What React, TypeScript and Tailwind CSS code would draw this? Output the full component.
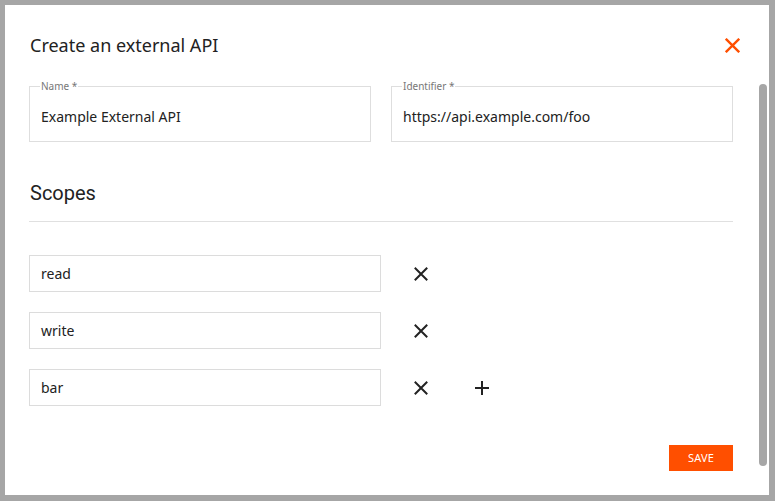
import React from "react";

const XIcon = ({ className = "", size = 14, stroke = 2 }: { className?: string; size?: number; stroke?: number }) => (
  <svg width={size} height={size} viewBox="0 0 14 14" className={className} fill="none">
    <path d="M1.5 1.5 L12.5 12.5 M12.5 1.5 L1.5 12.5" stroke="currentColor" strokeWidth={stroke} strokeLinecap="square" />
  </svg>
);

const PlusIcon = () => (
  <svg width={16} height={16} viewBox="0 0 16 16" fill="none">
    <path d="M8 1 V15 M1 8 H15" stroke="currentColor" strokeWidth={2} />
  </svg>
);

function Field({ label, value }: { label: string; value: string }) {
  return (
    <fieldset className="flex-1 border border-[#dedede] h-[62px] px-[11px] -mt-[6px] min-w-0">
      <legend className="text-[10px] leading-[12px] text-[#777] px-[1px] ml-[-1px]">{label}</legend>
      <div className="text-[14px] leading-[18px] text-[#222] pt-[16px]">{value}</div>
    </fieldset>
  );
}

function ScopeRow({ value, plus }: { value: string; plus?: boolean }) {
  return (
    <div className="flex items-center h-[37px]">
      <div className="w-[352px] h-[37px] border border-[#dcdcdc] flex items-center px-[11px] text-[14px] text-[#222]">
        {value}
      </div>
      <div className="ml-[33px] text-[#222] flex items-center">
        <XIcon size={14} />
      </div>
      <div className="ml-[46px] text-[#222] flex items-center">{plus && <PlusIcon />}</div>
    </div>
  );
}

export default function App() {
  return (
    <div
      className="w-[775px] h-[501px] bg-[#a6a6a6] pt-[5px] pl-[5px] pr-[6px] pb-[6px]"
      style={{ fontFamily: '"Noto Sans", "Open Sans", sans-serif' }}
    >
      <div className="relative w-full h-full bg-white">
        <div className="absolute left-[754px] top-[79px] w-[8px] h-[382px] rounded-full bg-[#a6a6a6]" />
        <div className="pl-[24px] pr-[36px] pt-[27px]">
          <div className="flex items-center justify-between h-[26px]">
            <h1 className="text-[18px] leading-[26px] text-[#222] ml-[1px]">Create an external API</h1>
            <button className="text-[#ff4f00] -mr-[7px] flex items-center">
              <XIcon size={15} stroke={2.2} />
            </button>
          </div>
          <div className="flex gap-[20px] mt-[28px]">
            <Field label="Name *" value="Example External API" />
            <Field label="Identifier *" value="https://api.example.com/foo" />
          </div>
          <h2 className="mt-[39px] text-[20px] leading-[24px] text-[#222] ml-[1px]" style={{ fontFamily: "Roboto, sans-serif" }}>
            Scopes
          </h2>
          <div className="mt-[16px] h-px bg-[#e0e0e0]" />
          <div className="mt-[33px] flex flex-col gap-[20px]">
            <ScopeRow value="read" />
            <ScopeRow value="write" />
            <ScopeRow value="bar" plus />
          </div>
          <div className="flex justify-end mt-[39px]">
            <button className="w-[64px] h-[26px] bg-[#ff4f00] text-white text-[11px] uppercase tracking-[0.2px]">
              Save
            </button>
          </div>
        </div>
      </div>
    </div>
  );
}
